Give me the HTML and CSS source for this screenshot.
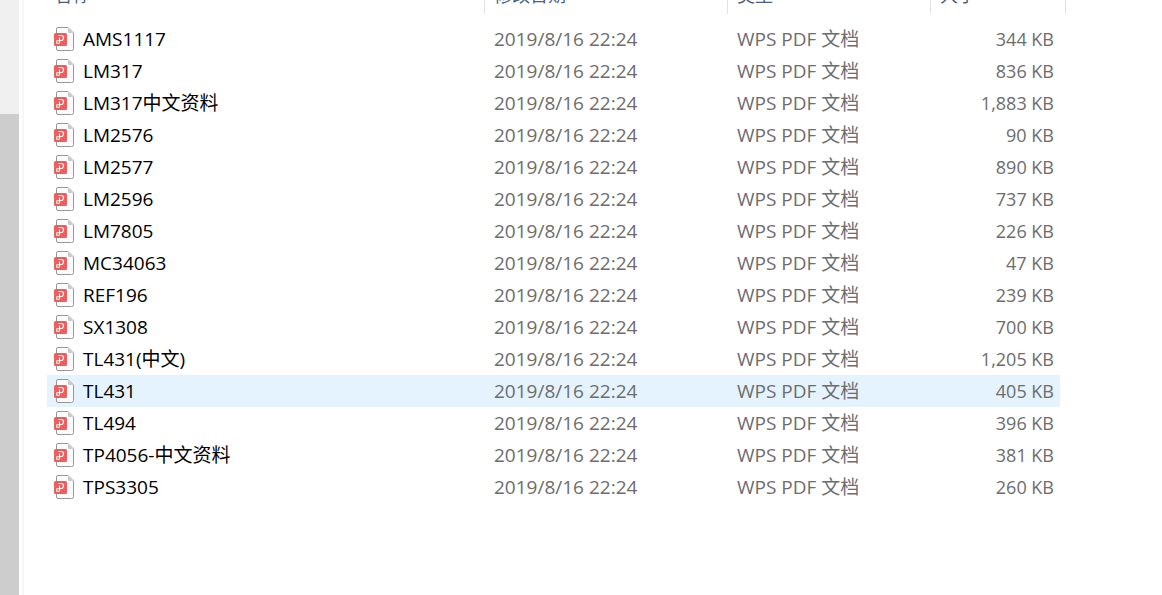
FILE: index.html
```html
<!DOCTYPE html>
<html lang="zh-CN">
<head>
<meta charset="utf-8">
<title>文件列表</title>
<link rel="stylesheet" href="styles.css">
</head>
<body>
<svg class="defs" aria-hidden="true">
  <defs>
    <linearGradient id="fold" x1="0" y1="1" x2="1" y2="0">
      <stop offset="0" stop-color="#bdbdc0"/>
      <stop offset="1" stop-color="#e6e6e8"/>
    </linearGradient>
    <symbol id="pdf" viewBox="0 0 20 24">
      <path d="M4 .5H14L19.500 6V21.500a2 2 0 0 1-2 2H4a1.500 1.500 0 0 1-1.500-1.500V2A1.500 1.500 0 0 1 4 .5Z" fill="#fbfbfb" stroke="#98989a"/>
      <path d="M14 .8V4.500Q14 6 15.500 6H19.200Z" fill="url(#fold)"/>
      <rect x="0" y="6" width="13" height="13" rx="1.500" fill="#ed5f5f"/>
      <path d="M4.500 8.500H7a2.500 2.500 0 0 1 0 5H3.900a1.500 1.500 0 1 0 1.600 1.500V10.500" fill="none" stroke="#fff" stroke-width="1.100"/>
    </symbol>
  </defs>
</svg>
<div class="window">
  <div class="track"><div class="thumb"></div></div>
  <main class="pane">
    <table class="files">
      <colgroup><col class="c-name"><col class="c-date"><col class="c-type"><col class="c-size"></colgroup>
      <thead>
        <tr>
          <th scope="col"><div class="head"><span>名称</span></div></th>
          <th scope="col"><div class="head"><span>修改日期</span></div></th>
          <th scope="col"><div class="head"><span>类型</span></div></th>
          <th scope="col"><div class="head"><span>大小</span></div></th>
        </tr>
      </thead>
      <tbody id="rows"></tbody>
    </table>
  </main>
</div>
<script src="files.js"></script>
</body>
</html>
```
FILE: files.js
```js
const files = [
  ["AMS1117", "344 KB"],
  ["LM317", "836 KB"],
  ["LM317中文资料", "1,883 KB"],
  ["LM2576", "90 KB"],
  ["LM2577", "890 KB"],
  ["LM2596", "737 KB"],
  ["LM7805", "226 KB"],
  ["MC34063", "47 KB"],
  ["REF196", "239 KB"],
  ["SX1308", "700 KB"],
  ["TL431(中文)", "1,205 KB"],
  ["TL431", "405 KB"],
  ["TL494", "396 KB"],
  ["TP4056-中文资料", "381 KB"],
  ["TPS3305", "260 KB"]
];
document.getElementById("rows").innerHTML = files.map(([name, size]) => `
  <tr${name === "TL431" ? ' class="active"' : ""}>
    <td><div class="name"><svg class="icon" aria-hidden="true"><use href="#pdf"/></svg><span>${name}</span></div></td>
    <td>2019/8/16 22:24</td>
    <td>WPS PDF 文档</td>
    <td class="size">${size}</td>
  </tr>`).join("");
```
FILE: styles.css
```css
* { box-sizing: border-box; }

body {
  margin: 0;
  background: #fff;
  color: #6d6d6d;
  font: 19px/32px "Open Sans", "Noto Sans CJK SC", sans-serif;
}

.defs {
  position: absolute;
  width: 0;
  height: 0;
}

.window {
  display: flex;
  min-height: 100vh;
}

.track {
  display: flex;
  flex: none;
  width: 19px;
  padding-top: 114px;
  background: #f0f0f0;
}

.thumb {
  flex: 1;
  background: #cdcdcd;
}

.pane {
  flex: 1;
  margin-left: 3px;
  padding-left: 23px;
  border-left: 2px solid #f7f7f7;
}

.files {
  table-layout: fixed;
  width: 1019px;
  border-spacing: 0;
}

.c-name { width: 438px; }
.c-date { width: 243px; }
.c-type { width: 203px; }
.c-size { width: 135px; }

th {
  padding: 0 0 9px;
  font-size: 18px;
  font-weight: 400;
  text-align: left;
}

.head {
  display: flex;
  align-items: flex-end;
  height: 14px;
  padding: 0 9px 7px;
  overflow: hidden;
  border-right: 1px solid #e2e2e2;
  color: #4c607a;
  line-height: 24px;
}

th:first-child .head { padding-left: 7px; }

td {
  height: 32px;
  padding: 0 0 0 9px;
  white-space: nowrap;
}

td:first-child {
  padding-left: 7px;
  color: #000;
}

.size {
  padding-right: 6px;
  border-right: 6px solid transparent;
  background-clip: padding-box;
  font-size: 18px;
  text-align: right;
}

.active td { background-color: #e5f3ff; }

.name {
  display: flex;
  align-items: center;
  gap: 9px;
}

.icon {
  width: 20px;
  height: 24px;
}
```
